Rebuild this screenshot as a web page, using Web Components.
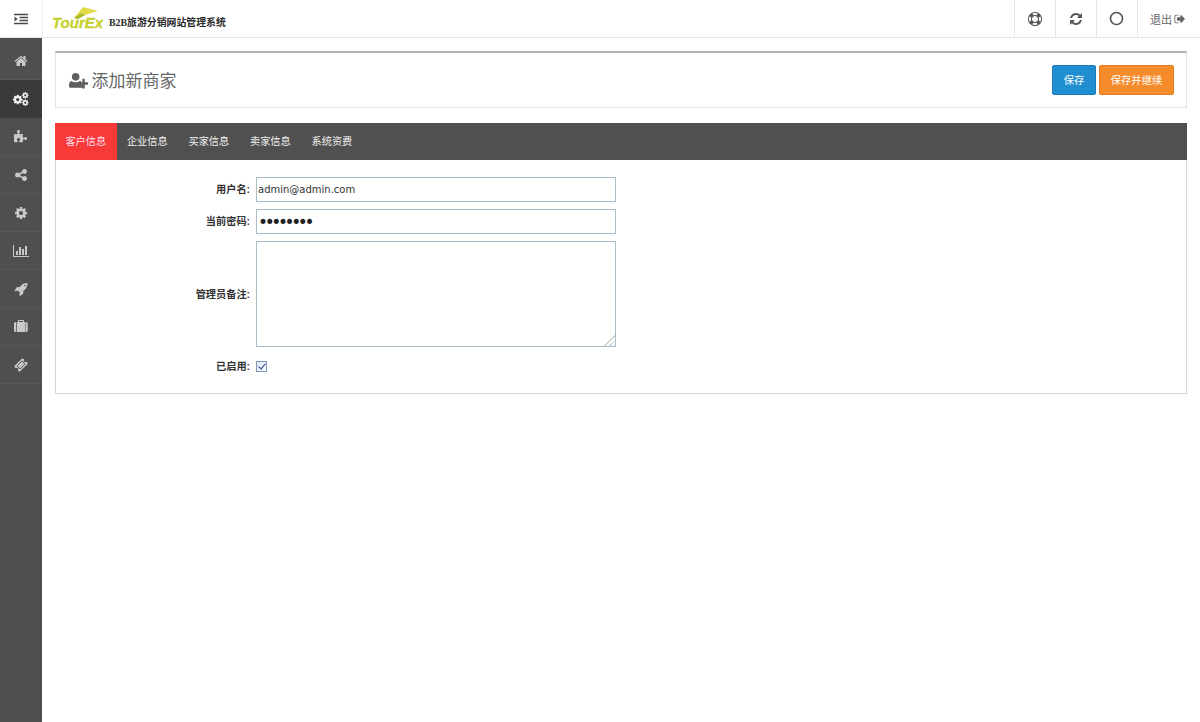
<!DOCTYPE html>
<html lang="zh">
<head>
<meta charset="utf-8">
<title>添加新商家</title>
<style>
  html, body { margin: 0; height: 100%; }
  body { font-family: "Liberation Sans", "Noto Sans CJK SC", sans-serif; background: #fff; }
</style>
</head>
<body>
<admin-shell>
  <top-bar slot="top"></top-bar>
  <side-nav slot="side">
    <nav-item icon="home"></nav-item>
    <nav-item icon="cogs" active></nav-item>
    <nav-item icon="puzzle"></nav-item>
    <nav-item icon="share"></nav-item>
    <nav-item icon="cog"></nav-item>
    <nav-item icon="chart"></nav-item>
    <nav-item icon="rocket"></nav-item>
    <nav-item icon="briefcase"></nav-item>
    <nav-item icon="ticket"></nav-item>
  </side-nav>
  <page-title>添加新商家</page-title>
  <tab-panel>
    <tab-item slot="tabs" active>客户信息</tab-item>
    <tab-item slot="tabs">企业信息</tab-item>
    <tab-item slot="tabs">买家信息</tab-item>
    <tab-item slot="tabs">卖家信息</tab-item>
    <tab-item slot="tabs">系统资费</tab-item>
    <merchant-form></merchant-form>
  </tab-panel>
</admin-shell>

<script>
// Icon outlines, 1792 box unless the entry says otherwise
const ICONS = {
  home: '<path d="M1472 992v480q0 26-19 45t-45 19h-384v-384h-256v384h-384q-26 0-45-19t-19-45v-480q0-1 .5-3t.5-3l575-474 575 474q1 2 1 6zm223-69l-62 74q-8 9-21 11h-3q-13 0-21-7l-692-577-692 577q-12 8-24 7-13-2-21-11l-62-74q-8-10-7-23.5t11-21.5l719-599q32-26 76-26t76 26l244 204v-195q0-14 9-23t23-9h192q14 0 23 9t9 23v408l219 182q10 8 11 21.5t-7 23.5z"/>',
  puzzle: '<path d="M1664 1098q0 81-44.5 135t-123.5 54q-41 0-77.5-17.5t-59-38-56.5-38-71-17.5q-110 0-110 124 0 39 16 115t15 115v5q-22 0-33 1-34 3-97.5 11.5t-115.5 13.5-98 5q-61 0-103-26.5t-42-83.5q0-37 17.5-71t38-56.5 38-59 17.5-77.5q0-79-54-123.5t-135-44.5q-84 0-143 45.5t-59 127.5q0 43 15 83t33.5 64.5 33.5 53 15 50.5q0 45-46 89-37 35-117 35-95 0-245-24-9-2-27.5-4t-27.5-4l-13-2q-1 0-3-1-2 0-2-1v-1024q2 1 17.5 3.5t34 5 21.5 3.5q150 24 245 24 80 0 117-35 46-44 46-89 0-22-15-50.5t-33.5-53-33.5-64.5-15-83q0-82 59-127.5t144-45.5q80 0 134 44.5t54 123.5q0 41-17.5 77.5t-38 59-38 56.5-17.5 71q0 57 42 83.5t103 26.5q64 0 180-15t163-17v2q-1 2-3.5 17.5t-5 34-3.5 21.5q-24 150-24 245 0 80 35 117 44 46 89 46 22 0 50.5-15t53-33.5 64.5-33.5 83-15q82 0 127.5 59t45.5 143z"/>',
  share: '<path d="M1344 1024q133 0 226.5 93.5t93.5 226.5-93.5 226.5-226.5 93.5-226.5-93.5-93.5-226.5q0-12 2-34l-360-180q-92 86-218 86-133 0-226.5-93.5t-93.5-226.5 93.5-226.5 226.5-93.5q126 0 218 86l360-180q-2-22-2-34 0-133 93.5-226.5t226.5-93.5 226.5 93.5 93.5 226.5-93.5 226.5-226.5 93.5q-126 0-218-86l-360 180q2 22 2 34t-2 34l360 180q92-86 218-86z"/>',
  cog: '<path fill-rule="evenodd" d="M1152 896q0-106-75-181t-181-75-181 75-75 181 75 181 181 75 181-75 75-181zm512-109v222q0 12-8 23t-20 13l-185 28q-19 54-39 91 35 50 107 138 10 12 10 25t-9 23q-27 37-99 108t-94 71q-12 0-26-9l-138-108q-44 23-91 38-16 136-29 186-7 28-36 28h-222q-14 0-24.5-8.5t-11.5-21.5l-28-184q-49-16-90-37l-141 107q-10 9-25 9-14 0-25-11-126-114-165-168-7-10-7-23 0-12 8-23 15-21 51-66.5t54-70.5q-27-50-41-99l-183-27q-13-2-21-12.5t-8-23.5v-222q0-12 8-23t19-13l186-28q14-46 39-92-40-57-107-138-10-12-10-24 0-10 9-23 26-36 98.5-107.5t94.5-71.5q13 0 26 10l138 107q44-23 91-38 16-136 29-186 7-28 36-28h222q14 0 24.5 8.5t11.5 21.5l28 184q49 16 90 37l142-107q9-9 24-9 13 0 25 10 129 119 165 170 7 8 7 22 0 12-8 23-15 21-51 66.5t-54 70.5q26 50 41 98l183 28q13 2 21 12.5t8 23.5z"/>',
  chart: { box: "0 0 2048 1792", body: '<path d="M640 896v512h-256v-512h256zm384-512v1024h-256v-1024h256zm1024 1152v128h-2048v-1536h128v1408h1920zm-640-896v768h-256v-768h256zm384-384v1152h-256v-1152h256z"/>' },
  rocket: '<path fill-rule="evenodd" d="M1504 448q0-40-28-68t-68-28-68 28-28 68 28 68 68 28 68-28 28-68zm224-288q0 249-75.5 430.5t-253.5 360.5q-81 80-195 176l-20 379q-2 16-16 26l-384 224q-7 4-16 4-12 0-23-9l-64-64q-13-14-8-32l85-276-281-281-276 85q-3 1-9 1-14 0-23-9l-64-64q-17-19-5-39l224-384q10-14 26-16l379-20q96-114 176-195 188-187 358-258t431-71q14 0 24 9.5t10 22.5z"/>',
  briefcase: '<path fill-rule="evenodd" d="M640 256h512v-128h-512v128zm-352 0v1280h-64q-92 0-158-66t-66-158v-832q0-92 66-158t158-66h64zm1120 0v1280h-1024v-1280h128v-160q0-40 28-68t68-28h576q40 0 68 28t28 68v160h128zm352 224v832q0 92-66 158t-158 66h-64v-1280h64q92 0 158 66t66 158z"/>',
  ticket: '<path fill-rule="evenodd" d="M1024 452l316 316-572 572-316-316zm-211 979l618-618q19-19 19-45t-19-45l-362-362q-18-18-45-18t-45 18l-618 618q-19 19-19 45t19 45l362 362q18 18 45 18t45-18zm889-637l-907 908q-37 37-90.5 37t-90.5-37l-126-126q56-56 56-136t-56-136-136-56-136 56l-125-126q-37-37-37-90.5t37-90.5l907-906q37-37 90.5-37t90.5 37l125 125q-56 56-56 136t56 136 136 56 136-56l126 125q37 37 37 90.5t-37 90.5z"/>',
  lifering: '<path fill-rule="evenodd" d="M896 0q182 0 348 71t286 191 191 286 71 348-71 348-191 286-286 191-348 71-348-71-286-191-191-286-71-348 71-348 191-286 286-191 348-71zm0 128q-190 0-361 90l194 194q82-28 167-28t167 28l194-194q-171-90-361-90zm-678 1129l194-194q-28-82-28-167t28-167l-194-194q-90 171-90 361t90 361zm678 407q190 0 361-90l-194-194q-82 28-167 28t-167-28l-194 194q171 90 361 90zm0-384q159 0 271.5-112.5t112.5-271.5-112.5-271.5-271.5-112.5-271.5 112.5-112.5 271.5 112.5 271.5 271.5 112.5zm484-217l194 194q90-171 90-361t-90-361l-194 194q28 82 28 167t-28 167z"/>',
  refresh: '<path d="M1639 1056q0 5-1 7-64 268-268 434.5t-478 166.5q-146 0-282.5-55t-243.5-157l-129 129q-19 19-45 19t-45-19-19-45v-448q0-26 19-45t45-19h448q26 0 45 19t19 45-19 45l-137 137q71 66 161 102t187 36q134 0 250-65t186-179q11-17 53-117 8-23 30-23h192q13 0 22.5 9.5t9.5 22.5zm25-800v448q0 26-19 45t-45 19h-448q-26 0-45-19t-19-45 19-45l138-138q-148-137-349-137-134 0-250 65t-186 179q-11 17-53 117-8 23-30 23h-199q-13 0-22.5-9.5t-9.5-22.5v-7q65-268 270-434.5t480-166.5q146 0 284 55.5t245 156.5l130-129q19-19 45-19t45 19 19 45z"/>',
  signout: '<path d="M704 1440q0 4 1 20t.5 26.5-3 23.5-10 19.5-20.5 6.5h-320q-119 0-203.5-84.5t-84.5-203.5v-704q0-119 84.5-203.5t203.5-84.5h320q13 0 22.5 9.5t9.5 22.5q0 4 1 20t.5 26.5-3 23.5-10 19.5-20.5 6.5h-320q-66 0-113 47t-47 113v704q0 66 47 113t113 47h312l11.5 1 11.5 3 8 5.5 7 9 2 13.5zm928-544q0 26-19 45l-544 544q-19 19-45 19t-45-19-19-45v-288h-448q-26 0-45-19t-19-45v-384q0-26 19-45t45-19h448v-288q0-26 19-45t45-19 45 19l544 544q19 19 19 45z"/>',
  ring: '<circle cx="896" cy="896" r="720" fill="none" stroke="currentColor" stroke-width="200"/>',
  indent: '<path d="M0 224h1792v192H0zM704 608h1088v192H704zM704 992h1088v192H704zM0 1376h1792v192H0zM64 576l416 320-416 320z"/>',
  userplus: { box: "0 0 2048 1792", body: '<circle cx="704" cy="512" r="400"/><path d="M120 1664q-120 0-120-190 0-470 260-530 170 130 444 130t444-130q80 0 130 30v276q0 60 40 90t90 30h210v170q-60 124-190 124z"/><path d="M1408 704h256v384h384v256h-384v384h-256v-384h-384v-256h384z"/>' },
  // big gear plus two small ones, all from the cog outline
  cogs: { box: "0 0 2048 1792", body: null },
};
ICONS.cogs.body =
  `<g transform="translate(-110 250) scale(.8)">${ICONS.cog}</g>` +
  `<g transform="translate(1090 -60) scale(.54)">${ICONS.cog}</g>` +
  `<g transform="translate(1090 880) scale(.54)">${ICONS.cog}</g>`;

class FaIcon extends HTMLElement {
  connectedCallback() {
    const entry = ICONS[this.getAttribute("name")];
    const box = entry.box ?? "0 0 1792 1792";
    const body = entry.body ?? entry;
    const [, , w, h] = box.split(" ").map(Number);
    const size = parseFloat(this.getAttribute("size") ?? 14);
    const root = this.shadowRoot ?? this.attachShadow({ mode: "open" });
    root.innerHTML = `
      <style>
        :host { display: inline-flex; line-height: 0; }
        svg { fill: currentColor; display: block; }
      </style>
      <svg xmlns="http://www.w3.org/2000/svg" viewBox="${box}" width="${size * w / 1792}" height="${size * h / 1792}">${body}</svg>`;
  }
}
customElements.define("fa-icon", FaIcon);

class AdminShell extends HTMLElement {
  constructor() {
    super();
    this.attachShadow({ mode: "open" }).innerHTML = `
      <style>
        :host { display: grid; grid-template-columns: 42px 1fr; grid-template-rows: 38px 1fr; height: 722px; overflow: hidden; }
        .top { grid-column: 1 / 3; }
        main { padding: 13px 13px 0; min-width: 0; display: flex; flex-direction: column; gap: 15px; }
      </style>
      <div class="top"><slot name="top"></slot></div>
      <slot name="side"></slot>
      <main><slot></slot></main>`;
  }
}
customElements.define("admin-shell", AdminShell);

class TopBar extends HTMLElement {
  constructor() {
    super();
    this.attachShadow({ mode: "open" }).innerHTML = `
      <style>
        :host { display: flex; height: 38px; box-sizing: border-box; border-bottom: 1px solid #e4e4e4; background: #fff; color: #555; }
        .toggle { width: 42px; flex: none; display: flex; align-items: center; justify-content: center; border-right: 1px solid #eee; color: #4a4a4a; }
        .brand { display: flex; align-items: center; padding-left: 9px; gap: 5px; flex: 1; }
        .logo { position: relative; width: 52px; height: 24px; flex: none; margin-top: -2px; }
        .logo svg { position: absolute; left: 20px; top: 0; }
        .logo span { position: absolute; left: 0; bottom: 0; font: italic bold 15px/15px "Liberation Sans", sans-serif; -webkit-text-stroke: .3px #c6d12c; color: #c6d12c; }
        .name { font: bold 9.9px/14px "Liberation Serif", "Noto Sans CJK SC", serif; color: #2a2a2a; padding-top: 9px; }
        .tool { width: 41px; box-sizing: border-box; padding-right: 1px; display: flex; align-items: center; justify-content: center; border-left: 1px solid #e8e8e8; color: #555; }
        .out { width: 63px; box-sizing: border-box; display: flex; align-items: center; padding-left: 12px; gap: 2px; border-left: 1px solid #e8e8e8; font-size: 11px; color: #666; }
      </style>
      <div class="toggle"><fa-icon name="indent" size="14"></fa-icon></div>
      <div class="brand">
        <div class="logo">
          <svg width="28" height="14" viewBox="0 0 28 14"><path d="M2 12 11 1 26 5 13 9 6 13z" fill="#e3dc4a"/><path d="M2 12 9 7 13 9 6 13z" fill="#a9bd2c"/></svg>
          <span>TourEx</span>
        </div>
        <div class="name">B2B旅游分销网站管理系统</div>
      </div>
      <div class="tool"><fa-icon name="lifering" size="14"></fa-icon></div>
      <div class="tool"><fa-icon name="refresh" size="14"></fa-icon></div>
      <div class="tool"><fa-icon name="ring" size="15"></fa-icon></div>
      <div class="out">退出<fa-icon name="signout" size="12"></fa-icon></div>`;
  }
}
customElements.define("top-bar", TopBar);

class SideNav extends HTMLElement {
  constructor() {
    super();
    this.attachShadow({ mode: "open" }).innerHTML = `
      <style>
        :host { display: flex; flex-direction: column; background: #4f4f4f; padding-top: 4px; }
      </style>
      <slot></slot>`;
  }
}
customElements.define("side-nav", SideNav);

class NavItem extends HTMLElement {
  constructor() {
    super();
    const icon = this.getAttribute("icon");
    this.attachShadow({ mode: "open" }).innerHTML = `
      <style>
        :host { display: flex; height: 38px; box-sizing: border-box; align-items: center; justify-content: center; border-bottom: 1px solid #575757; color: #c9c9c9; }
        :host([active]) { background: #3a3a3a; color: #f2f2f2; border-bottom-color: #3a3a3a; }
      </style>
      <fa-icon name="${icon}" size="14"></fa-icon>`;
  }
}
customElements.define("nav-item", NavItem);

class PageTitle extends HTMLElement {
  constructor() {
    super();
    this.attachShadow({ mode: "open" }).innerHTML = `
      <style>
        :host { display: flex; align-items: center; height: 57px; box-sizing: border-box; border: 1px solid #e4e4e4; border-top: 2px solid #b4b4b4; padding: 0 12px 0 13px; color: #666; }
        .text { font-size: 17px; margin: -2px 0 0 3px; flex: 1; }
        fa-icon { color: #5e5e5e; }
        .btn { height: 30px; box-sizing: border-box; display: flex; align-items: center; justify-content: center; border-radius: 2px; color: #fff; font-size: 10.3px; padding-bottom: 2px; }
        .save { width: 44px; background: #1f8fd1; border: 1px solid #1a7db8; margin-right: 3px; }
        .next { width: 75px; background: #f68b2c; border: 1px solid #e57c20; }
      </style>
      <fa-icon name="userplus" size="17"></fa-icon>
      <span class="text"><slot></slot></span>
      <div class="btn save">保存</div>
      <div class="btn next">保存并继续</div>`;
  }
}
customElements.define("page-title", PageTitle);

class TabPanel extends HTMLElement {
  constructor() {
    super();
    this.attachShadow({ mode: "open" }).innerHTML = `
      <style>
        :host { display: block; border: 1px solid #d8d8d8; border-top: 0; }
        .tabs { display: flex; height: 37px; background: #505050; margin: 0 -1px; }
      </style>
      <div class="tabs"><slot name="tabs"></slot></div>
      <slot></slot>`;
  }
}
customElements.define("tab-panel", TabPanel);

class TabItem extends HTMLElement {
  constructor() {
    super();
    this.attachShadow({ mode: "open" }).innerHTML = `
      <style>
        :host { display: flex; align-items: center; padding: 0 10.4px 2px; color: #f0f0f0; font-size: 10.2px; }
        :host([active]) { background: #f73a37; color: #fde; }
      </style>
      <slot></slot>`;
  }
}
customElements.define("tab-item", TabItem);

class FormRow extends HTMLElement {
  constructor() {
    super();
    const label = this.getAttribute("label");
    this.attachShadow({ mode: "open" }).innerHTML = `
      <style>
        :host { display: grid; grid-template-columns: 194px 360px; column-gap: 6px; align-items: center; }
        label { text-align: right; font-size: 10.2px; font-weight: bold; color: #333; padding-bottom: 2px; }
      </style>
      <label>${label}</label>
      <div><slot></slot></div>`;
  }
}
customElements.define("form-row", FormRow);

class MerchantForm extends HTMLElement {
  constructor() {
    super();
    this.attachShadow({ mode: "open" }).innerHTML = `
      <style>
        :host { display: flex; flex-direction: column; gap: 7px; padding: 17px 0 18px; }
        input[type=text], input[type=password], textarea {
          display: block; box-sizing: border-box; width: 360px; margin: 0; border: 1px solid #a9bcc8; border-radius: 0;
          padding: 0 1px; font: 10px "DejaVu Sans", sans-serif; color: #333; background: #fff; outline: none;
        }
        input[type=text], input[type=password] { height: 25px; }
        input[type=password] { font-size: 17px; letter-spacing: -3.4px; color: #222; }
        textarea { height: 106px; resize: both; }
        textarea::-webkit-resizer { background: linear-gradient(135deg, transparent 62%, #d0d0d0 62%, #d0d0d0 68%, transparent 68%, transparent 80%, #d0d0d0 80%, #d0d0d0 86%, transparent 86%); }
        .last { margin-top: 4px; }
        input[type=checkbox] {
          appearance: none; display: block; position: relative; margin: 0; width: 11px; height: 11px; box-sizing: border-box;
          border: 1px solid #7f9db9; background: linear-gradient(135deg, #dfe6f2, #f6f8fc);
        }
        input[type=checkbox]:checked::after {
          content: ""; position: absolute; left: 3px; top: 0; width: 3px; height: 6px;
          border: solid #2a3f8f; border-width: 0 1.5px 1.5px 0; transform: rotate(40deg);
        }
      </style>
      <form-row label="用户名:"><input type="text" value="admin@admin.com"></form-row>
      <form-row label="当前密码:"><input type="password" value="password"></form-row>
      <form-row label="管理员备注:"><textarea></textarea></form-row>
      <form-row class="last" label="已启用:"><input type="checkbox" checked></form-row>`;
  }
}
customElements.define("merchant-form", MerchantForm);
</script>
</body>
</html>
